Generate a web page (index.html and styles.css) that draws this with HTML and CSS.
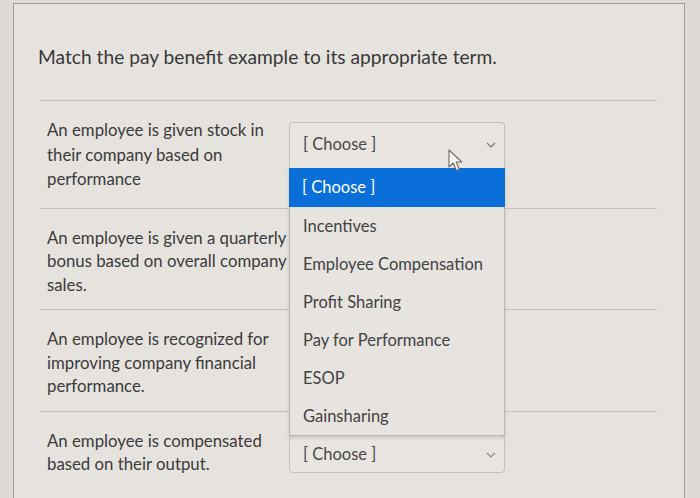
FILE: index.html
```html
<!DOCTYPE html>
<html lang="en">
<head>
<meta charset="utf-8">
<title>Matching question</title>
<link rel="stylesheet" href="styles.css">
</head>
<body>
<div class="card">
  <h2 class="title">Match the pay benefit example to its appropriate term.</h2>
  <div class="rows">
    <div class="row row-first">
      <div class="prompt">An employee is given stock in their company based on performance</div>
      <div class="select-wrap is-open">
        <div class="select select-open">
          <span>[ Choose ]</span>
          <svg class="chev" width="10" height="6" viewBox="0 0 10 6"><path d="M1 1 L5 5 L9 1" fill="none" stroke="#7a7874" stroke-width="1.2"/></svg>
        </div>
        <ul class="menu">
          <li class="opt opt-active">[ Choose ]</li>
          <li class="opt">Incentives</li>
          <li class="opt">Employee Compensation</li>
          <li class="opt">Profit Sharing</li>
          <li class="opt">Pay for Performance</li>
          <li class="opt">ESOP</li>
          <li class="opt">Gainsharing</li>
        </ul>
      </div>
    </div>
    <div class="row">
      <div class="prompt">An employee is given a quarterly bonus based on overall company sales.</div>
      <div class="select-wrap">
        <div class="select is-covered"><span>[ Choose ]</span></div>
      </div>
    </div>
    <div class="row">
      <div class="prompt">An employee is recognized for improving company financial performance.</div>
      <div class="select-wrap">
        <div class="select is-covered"><span>[ Choose ]</span></div>
      </div>
    </div>
    <div class="row row-last">
      <div class="prompt">An employee is compensated based on their output.</div>
      <div class="select-wrap">
        <div class="select select-tall">
          <span>[ Choose ]</span>
          <svg class="chev" width="10" height="6" viewBox="0 0 10 6"><path d="M1 1 L5 5 L9 1" fill="none" stroke="#8a8884" stroke-width="1.2"/></svg>
        </div>
      </div>
    </div>
  </div>
</div>
<svg class="cursor" width="16" height="24" viewBox="0 0 16 24"><path d="M1 1 L1 18 L5.2 14 L8.4 21.5 L11.3 20.2 L8.2 13 L13.8 13 Z" fill="#f4f3f1" stroke="#6d6b68" stroke-width="1.1" stroke-linejoin="round"/></svg>
</body>
</html>
```

FILE: styles.css
```css
html, body {
  margin: 0;
  padding: 0;
}
body {
  background: #dedbd6;
  font-family: Lato, "Open Sans", Arial, sans-serif;
  color: #3b3b3b;
  width: 700px;
  height: 498px;
  overflow: hidden;
  position: relative;
}
.card {
  margin: 3px 15px 0 13px;
  height: 495px;
  box-sizing: border-box;
  border: 1px solid #a09d98;
  border-bottom: none;
  background: #e6e3de;
  padding-top: 41px;
}
.title {
  margin: 0;
  padding-left: 24px;
  font-size: 19.2px;
  font-weight: 400;
  line-height: 24px;
  color: #383838;
}
.rows {
  margin: 31px 27px 0 26px;
  border-top: 1px solid #c3c0bb;
}
.row {
  display: flex;
  align-items: center;
  padding: 17px 0 13px;
  border-bottom: 1px solid #c3c0bb;
}
.row-first {
  align-items: flex-start;
  padding: 17px 0 16px;
}
.row-last {
  border-bottom: none;
}
.prompt {
  box-sizing: border-box;
  width: 249px;
  padding-left: 7px;
  font-size: 16.8px;
  line-height: 23.5px;
  color: #3a3a3a;
}
.row-first .prompt {
  line-height: 24.5px;
}
.select-wrap {
  position: relative;
  width: 216px;
}
.is-open {
  margin-top: 4px;
  z-index: 2;
}
.select {
  box-sizing: border-box;
  height: 36px;
  display: flex;
  align-items: center;
  justify-content: space-between;
  padding: 0 8px 0 13px;
  border: 1px solid #c2bfba;
  border-radius: 4px;
  background: #e8e5e0;
  font-size: 16.5px;
  color: #484848;
}
.select-tall {
  height: 38px;
  margin-top: 3px;
}
.is-covered {
  visibility: hidden;
}
.select-open {
  height: 46px;
  border-radius: 4px 4px 0 0;
  border-bottom: none;
  padding-bottom: 4px;
}
.chev {
  display: block;
  margin-top: 2px;
}
.menu {
  position: absolute;
  top: 100%;
  left: 0;
  width: 100%;
  margin: 0;
  padding: 0;
  list-style: none;
  box-sizing: border-box;
  border: 1px solid #bab7b2;
  border-top: none;
  background: #e7e4df;
  box-shadow: 0 2px 4px rgba(0, 0, 0, 0.12);
}
.opt {
  height: 38px;
  line-height: 38px;
  padding-left: 13px;
  font-size: 16.5px;
  color: #424242;
}
.opt-active {
  height: 39px;
  line-height: 39px;
  margin: 0 -1px;
  background: #0b6fd9;
  color: #ffffff;
}
.cursor {
  position: absolute;
  left: 448px;
  top: 149px;
  z-index: 5;
}
```
